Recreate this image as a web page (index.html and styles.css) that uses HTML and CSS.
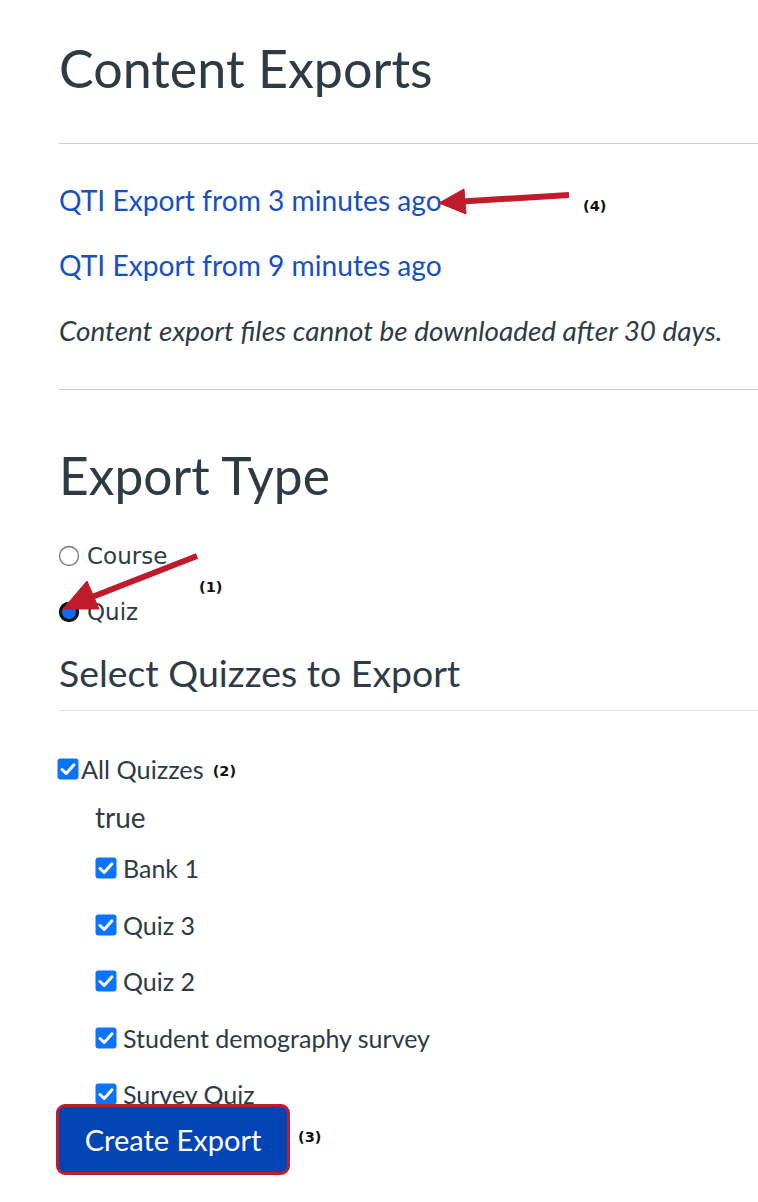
FILE: index.html
```html
<!DOCTYPE html>
<html lang="en">
<head>
<meta charset="utf-8">
<title>Content Exports</title>
<link rel="stylesheet" href="styles.css">
</head>
<body>
<main class="page">
  <h1 class="title">Content Exports</h1>
  <hr class="rule rule-top">
  <div class="exports">
    <p class="export-line"><a class="export-link" href="#">QTI Export from 3 minutes ago</a></p>
    <p class="export-line"><a class="export-link" href="#">QTI Export from 9 minutes ago</a></p>
    <p class="export-line note">Content export files cannot be downloaded after 30 days.</p>
  </div>
  <hr class="rule rule-mid">

  <h2 class="section-title">Export Type</h2>
  <div class="radios">
    <label class="radio-row">
      <svg class="radio" width="22" height="22" viewBox="0 0 22 22"><circle cx="11" cy="11" r="9.5" fill="#fff" stroke="#767676" stroke-width="1.3"/></svg>
      <span class="radio-label">Course</span>
    </label>
    <label class="radio-row radio-row-second">
      <svg class="radio" width="22" height="22" viewBox="0 0 22 22"><circle cx="11" cy="11" r="8.6" fill="#0b6ef5" stroke="#111" stroke-width="3.2"/></svg>
      <span class="radio-label">Quiz</span>
    </label>
  </div>

  <h3 class="sub-title">Select Quizzes to Export</h3>
  <hr class="rule rule-sub">

  <div class="quiz-all">
    <svg class="check" width="22" height="22" viewBox="0 0 22 22"><rect x="0.5" y="0.5" width="21" height="21" rx="3" fill="#0b74ff"/><path d="M5 11.5 L9.2 15.5 L17 6.8" fill="none" stroke="#fff" stroke-width="3" stroke-linecap="round" stroke-linejoin="round"/></svg>
    <span class="item-label">All Quizzes</span>
    <span class="tag tag-inline">(2)</span>
  </div>
  <div class="quiz-group">
    <div class="group-name">true</div>
    <ul class="quiz-list">
      <li class="quiz-item"><svg class="check" width="22" height="22" viewBox="0 0 22 22"><rect x="0.5" y="0.5" width="21" height="21" rx="3" fill="#0b74ff"/><path d="M5 11.5 L9.2 15.5 L17 6.8" fill="none" stroke="#fff" stroke-width="3" stroke-linecap="round" stroke-linejoin="round"/></svg><span class="item-label">Bank 1</span></li>
      <li class="quiz-item"><svg class="check" width="22" height="22" viewBox="0 0 22 22"><rect x="0.5" y="0.5" width="21" height="21" rx="3" fill="#0b74ff"/><path d="M5 11.5 L9.2 15.5 L17 6.8" fill="none" stroke="#fff" stroke-width="3" stroke-linecap="round" stroke-linejoin="round"/></svg><span class="item-label">Quiz 3</span></li>
      <li class="quiz-item"><svg class="check" width="22" height="22" viewBox="0 0 22 22"><rect x="0.5" y="0.5" width="21" height="21" rx="3" fill="#0b74ff"/><path d="M5 11.5 L9.2 15.5 L17 6.8" fill="none" stroke="#fff" stroke-width="3" stroke-linecap="round" stroke-linejoin="round"/></svg><span class="item-label">Quiz 2</span></li>
      <li class="quiz-item"><svg class="check" width="22" height="22" viewBox="0 0 22 22"><rect x="0.5" y="0.5" width="21" height="21" rx="3" fill="#0b74ff"/><path d="M5 11.5 L9.2 15.5 L17 6.8" fill="none" stroke="#fff" stroke-width="3" stroke-linecap="round" stroke-linejoin="round"/></svg><span class="item-label">Student demography survey</span></li>
      <li class="quiz-item"><svg class="check" width="22" height="22" viewBox="0 0 22 22"><rect x="0.5" y="0.5" width="21" height="21" rx="3" fill="#0b74ff"/><path d="M5 11.5 L9.2 15.5 L17 6.8" fill="none" stroke="#fff" stroke-width="3" stroke-linecap="round" stroke-linejoin="round"/></svg><span class="item-label">Survey Quiz</span></li>
    </ul>
  </div>

  <div class="actions">
    <button class="btn-create" type="button">Create Export</button>
    <span class="tag tag-btn">(3)</span>
  </div>

  <svg class="annotations" width="758" height="1202" viewBox="0 0 758 1202" aria-hidden="true">
    <g fill="#c01b2b" stroke="#c01b2b">
      <line x1="569" y1="195" x2="462" y2="201.5" stroke-width="6"/>
      <polygon points="439,203 466,214 464,189" stroke-width="1" stroke-linejoin="round"/>
      <line x1="197" y1="556" x2="92" y2="597" stroke-width="6"/>
      <polygon points="63,609 99,609 87,581" stroke-width="1" stroke-linejoin="round"/>
    </g>
  </svg>
  <span class="tag tag-float tag-four">(4)</span>
  <span class="tag tag-float tag-one">(1)</span>
</main>
</body>
</html>
```

FILE: styles.css
```css
html, body {
  margin: 0;
  padding: 0;
  background: #ffffff;
}

body {
  font-family: Lato, "Liberation Sans", sans-serif;
  color: #2d3b45;
}

.page {
  position: relative;
  width: 758px;
  min-height: 1202px;
  box-sizing: border-box;
  padding: 38px 0 0 59px;
  overflow: hidden;
}

.title {
  margin: 0;
  font-size: 52px;
  font-weight: 400;
  line-height: 60px;
}

.rule {
  margin: 0;
  border: 0;
  border-top: 1px solid #c7cdd1;
  height: 0;
}

.rule-top {
  margin-top: 45px;
}

.exports {
  display: flex;
  flex-direction: column;
  gap: 31px;
  margin-top: 39px;
}

.export-line {
  margin: 0;
  font-size: 28.2px;
  line-height: 34px;
}

.export-link {
  color: #1650c2;
  text-decoration: none;
}

.note {
  font-style: italic;
  font-size: 27.9px;
}

.rule-mid {
  margin-top: 42px;
}

.section-title {
  margin: 55px 0 0;
  font-size: 51.5px;
  font-weight: 400;
  line-height: 60px;
}

.radios {
  display: flex;
  flex-direction: column;
  gap: 26px;
  margin-top: 36px;
}

.radio-row {
  display: flex;
  align-items: center;
  gap: 7px;
  height: 30px;
  font-family: "DejaVu Sans", sans-serif;
  font-size: 23px;
  line-height: 30px;
}

.radio {
  display: block;
  margin-left: -1px;
}

.sub-title {
  margin: 24px 0 0;
  font-size: 37.4px;
  font-weight: 400;
  line-height: 44px;
}

.rule-sub {
  margin-top: 15px;
  border-top-color: #dfe3e6;
}

.quiz-all {
  display: flex;
  align-items: center;
  margin-top: 44px;
  margin-left: -2px;
  height: 28px;
  font-size: 25.3px;
  line-height: 28px;
}

.quiz-all .check {
  margin-right: 2px;
}

.quiz-group {
  padding-left: 36px;
  margin-top: 18px;
}

.group-name {
  font-size: 28px;
  line-height: 32px;
}

.quiz-list {
  list-style: none;
  margin: 21px 0 0;
  padding: 0;
  display: flex;
  flex-direction: column;
  gap: 28.5px;
}

.quiz-item {
  display: flex;
  align-items: center;
  gap: 6px;
  height: 28px;
  font-size: 25px;
  line-height: 28px;
}

.check {
  display: block;
  flex: none;
}

.actions {
  display: flex;
  align-items: center;
  gap: 8px;
  margin-top: -4px;
  margin-left: -3px;
  position: relative;
}

.btn-create {
  width: 234px;
  height: 71px;
  box-sizing: border-box;
  border: 3px solid #b91f2f;
  border-radius: 9px;
  background: #0445b5;
  color: #ffffff;
  font-family: Lato, "Liberation Sans", sans-serif;
  font-size: 29px;
  padding: 0;
  margin-top: 0;
}

.tag {
  font-family: "DejaVu Sans", sans-serif;
  font-weight: 700;
  font-size: 14.5px;
  color: #111;
}

.tag-inline {
  margin-left: 9px;
  margin-top: 4px;
}

.tag-btn {
  margin-top: -6px;
}

.annotations {
  position: absolute;
  left: 0;
  top: 0;
  pointer-events: none;
}

.tag-float {
  position: absolute;
  line-height: 16px;
}

.tag-four {
  left: 583px;
  top: 198px;
}

.tag-one {
  left: 199px;
  top: 579px;
}
```
